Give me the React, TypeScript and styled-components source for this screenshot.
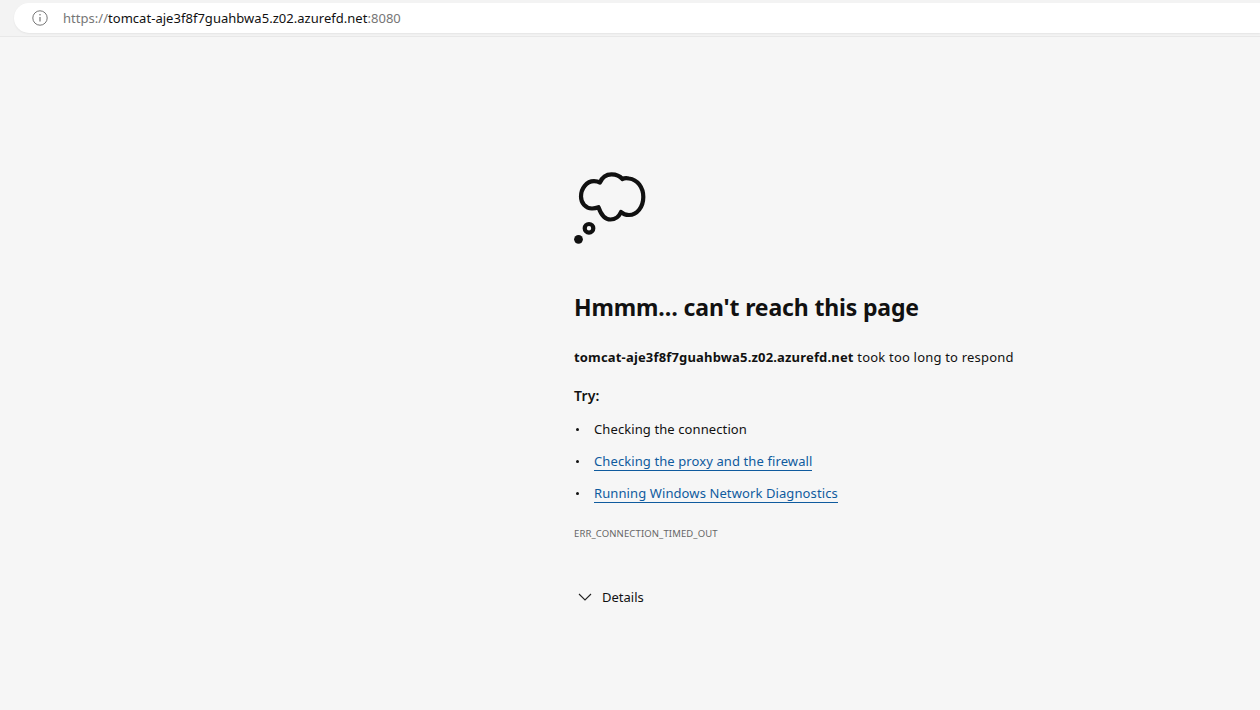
import React from "react"
import styled, { createGlobalStyle } from "styled-components"

const GlobalStyle = createGlobalStyle`
	html, body {
		margin: 0;
		height: 100%;
		background: #f6f6f6;
		font-family: "Noto Sans", "Open Sans", sans-serif;
		color: #111;
	}
`

function InfoIcon() {
	return (
		<svg width="16" height="16" viewBox="0 0 16 16" fill="none" stroke="#767676" strokeWidth="1">
			<circle cx="8" cy="8" r="7.2" />
			<path d="M8 7v4.6" strokeWidth="1.2" />
			<circle cx="8" cy="4.8" r="0.8" fill="#767676" stroke="none" />
		</svg>
	)
}

function ThoughtIcon() {
	return (
		<svg width="74" height="74" viewBox="0 0 74 74" fill="none" stroke="#111" strokeWidth="4.2">
			<path
				d="M7 24.500C7 31 11.500 36.500 18 36.500C20.500 36.500 22.500 36 24.500 35.200C27 42.500 31 47.500 36.500 47.500C41.500 47.500 45 44.500 47 40C49 42 52 43 55 43C63 43 69.300 35 69.300 25C69.300 15.500 63.500 7.500 55 6.500C52.500 6 50 6.200 48.300 7C46 4 42 2.300 37.500 2.300C32.500 2.300 28 5.500 26 10.500C24 9.500 22 9.200 20 9.200C12.500 9.200 7 16.500 7 24.500Z"
				strokeLinejoin="round"
			/>
			<circle cx="15" cy="56.300" r="4.300" />
			<circle cx="4.500" cy="67.300" r="4.400" fill="#111" stroke="none" />
		</svg>
	)
}

function ChevronIcon() {
	return (
		<svg width="14" height="8" viewBox="0 0 14 8" fill="none" stroke="#222" strokeWidth="1.1">
			<path d="M1 1l6 6 6-6" />
		</svg>
	)
}

export default function App() {
	return (
		<>
			<GlobalStyle />
			<TopBar>
				<AddressBar>
					<InfoIcon />
					<Url>
						<Scheme>https://</Scheme>tomcat-aje3f8f7guahbwa5.z02.azurefd.net<Port>:8080</Port>
					</Url>
				</AddressBar>
			</TopBar>
			<Page>
				<Main>
					<ThoughtIcon />
					<Title>Hmmm… can't reach this page</Title>
					<Message>
						<strong>tomcat-aje3f8f7guahbwa5.z02.azurefd.net</strong> took too long to respond
					</Message>
					<TryLabel>Try:</TryLabel>
					<Suggestions>
						<li>Checking the connection</li>
						<li>
							<SuggestionLink href="#">Checking the proxy and the firewall</SuggestionLink>
						</li>
						<li>
							<SuggestionLink href="#">Running Windows Network Diagnostics</SuggestionLink>
						</li>
					</Suggestions>
					<ErrorCode>ERR_CONNECTION_TIMED_OUT</ErrorCode>
					<DetailsToggle>
						<ChevronIcon />
						Details
					</DetailsToggle>
				</Main>
			</Page>
		</>
	)
}

const TopBar = styled.header`
	height: 33px;
	padding: 3px 0 0 14px;
	background: #f3f3f3;
	border-bottom: 1px solid #e8e8e8;
`

const AddressBar = styled.div`
	height: 30px;
	display: flex;
	align-items: center;
	gap: 15px;
	padding-left: 18px;
	background: #fff;
	border-radius: 15px 0 0 15px;
	box-shadow: 0 1px 2px rgba(0, 0, 0, 0.06);
`

const Url = styled.span`
	font-size: 13px;
	letter-spacing: 0.03px;
	color: #111;
`

const Scheme = styled.span`
	color: #767676;
`

const Port = styled.span`
	color: #767676;
`

const Page = styled.main`
	padding: 135px 0 0 574px;
`

const Main = styled.div`
	width: 600px;
	display: flex;
	flex-direction: column;
	align-items: flex-start;
`

const Title = styled.h1`
	margin: 45px 0 0;
	font-size: 23px;
	line-height: 32px;
	font-weight: 700;
	letter-spacing: -0.15px;
	color: #111;
`

const Message = styled.p`
	margin: 24px 0 0;
	font-size: 13px;
	line-height: 20px;
	letter-spacing: 0.2px;

	strong {
		letter-spacing: 0.17px;
	}
`

const TryLabel = styled.p`
	margin: 19px 0 0;
	font-size: 14px;
	line-height: 20px;
	font-weight: 600;
	letter-spacing: 0.2px;
`

const Suggestions = styled.ul`
	margin: 13px 0 0;
	padding: 0 0 0 2px;
	list-style: none;
	font-size: 13px;
	line-height: 20px;
	letter-spacing: 0.1px;
	display: flex;
	flex-direction: column;
	gap: 12px;

	li {
		display: flex;
		align-items: center;
		gap: 15px;
	}

	li::before {
		content: "";
		width: 3px;
		height: 3px;
		border-radius: 50%;
		background: #111;
	}
`

const SuggestionLink = styled.a`
	padding-top: 1px;
	line-height: 18px;
	color: #0f5b9e;
	text-decoration: none;
	border-bottom: 1px solid #0f5b9e;
`

const ErrorCode = styled.div`
	margin-top: 24px;
	font-size: 9.5px;
	line-height: 14px;
	letter-spacing: 0.12px;
	color: #666;
`

const DetailsToggle = styled.div`
	margin-top: 46px;
	padding-left: 4px;
	display: flex;
	align-items: center;
	gap: 10px;
	font-size: 13px;
	line-height: 20px;
`
